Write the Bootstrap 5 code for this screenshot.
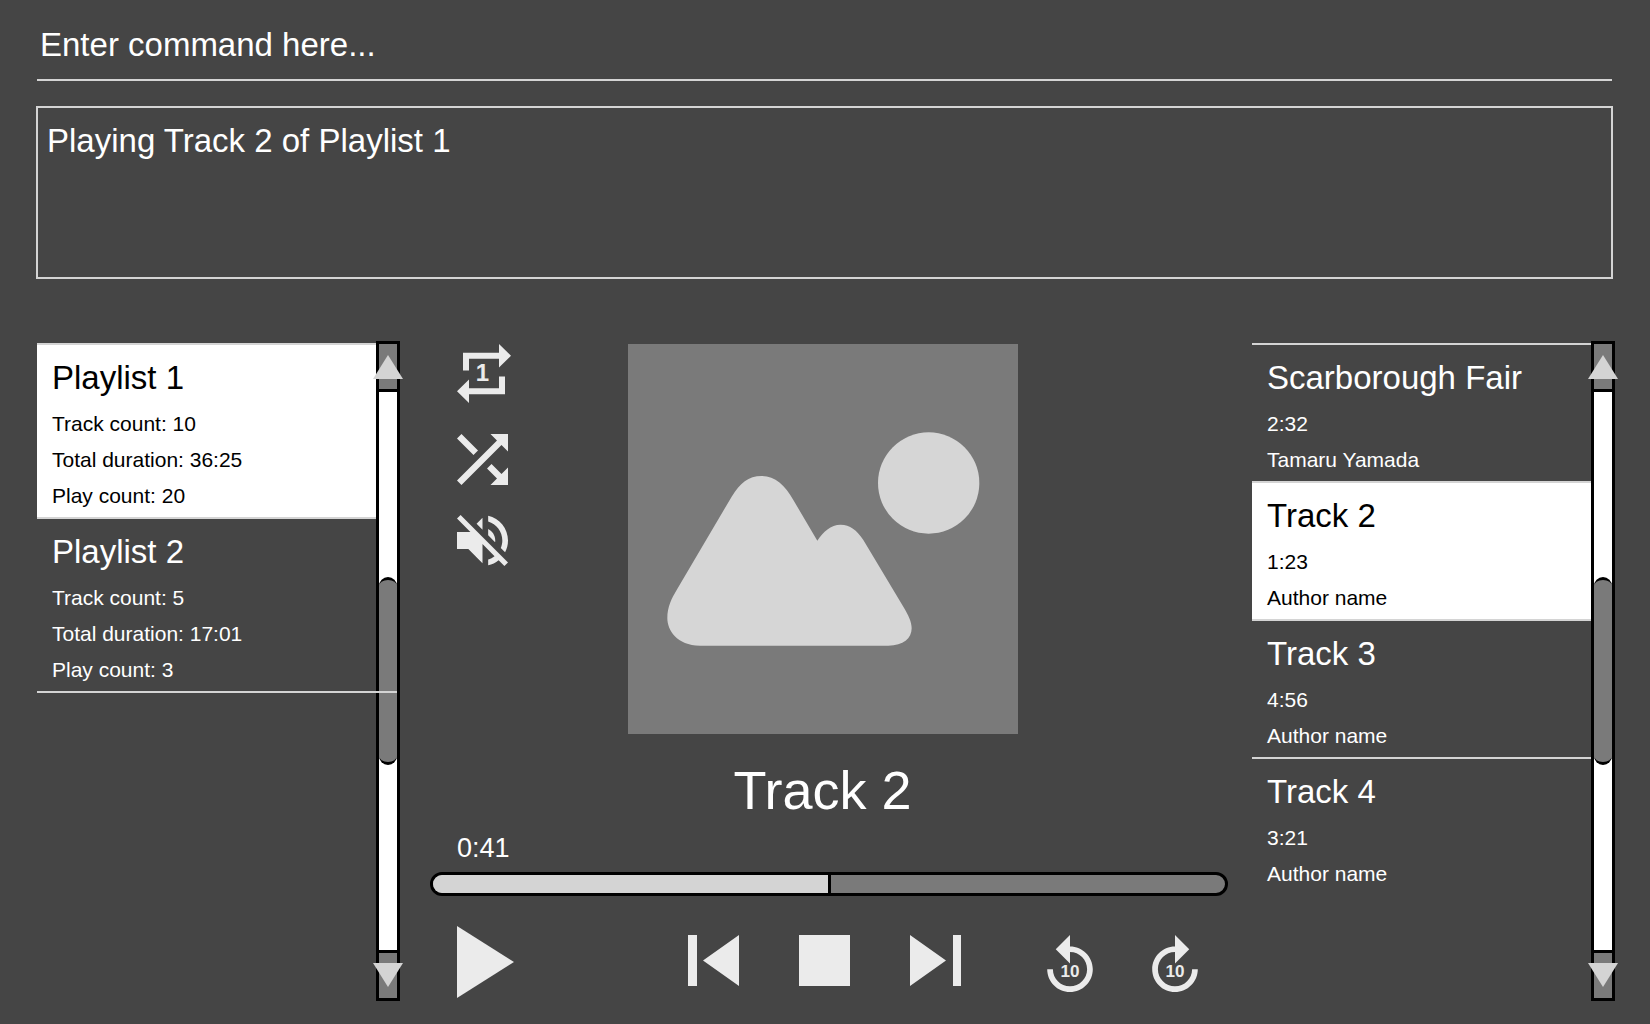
<!DOCTYPE html>
<html lang="en">
<head>
    <meta charset="UTF-8">
    <meta name="viewport" content="width=device-width, initial-scale=1.0">
    <link href="https://cdn.jsdelivr.net/npm/bootstrap@5.3.3/dist/css/bootstrap.min.css" rel="stylesheet">
    <script src="https://cdn.jsdelivr.net/npm/bootstrap@5.3.3/dist/js/bootstrap.bundle.min.js"></script>
    <title>Music Player</title>
    <style>
        body { background: #454545; color: #fff; font-family: "Liberation Sans", Arial, sans-serif; height: 1024px; overflow: hidden; }
        .shell { padding: 0 37px 0 36px; }

        .cmd-input { background: transparent; color: #fff; border: 0; border-bottom: 2px solid #d4d4d4; border-radius: 0; font-size: 33px; line-height: 37px; height: 81px; padding: 26px 3px 16px 3px; margin-left: 1px; width: calc(100% - 2px); }
        .cmd-input::placeholder { color: #fff; opacity: 1; }
        .cmd-input:focus { background: transparent; color: #fff; box-shadow: none; border-color: #d4d4d4; }
        .log-box { border: 2px solid #d4d4d4; height: 173px; margin-top: 25px; padding: 14px 9px; font-size: 33px; line-height: 38px; }

        .main-row { margin-top: 62px; height: 660px; }
        .side-left { width: 364px; }
        .side-left .items { margin-left: 1px; }
        .side-right { width: 363px; }
        .centre { width: 798px; margin: 0 24px 0 30px; }

        .items { padding-top: 2px; }
        .list-group-flush > .entry { padding: 9px 15px 3px 15px; border: 0; border-bottom: 2px solid #d4d4d4; border-radius: 0; background: transparent; color: #fff; position: relative; }
        .list-group-flush > .entry:first-child { border-top: 2px solid #d4d4d4; }
        .list-group-flush > .entry.picked { background: #fff; color: #000; }
        .list-group-flush > .entry.no-line { border-bottom: 0; }
        .list-group-flush > .entry.over-bar { margin-right: -21px; z-index: 2; background: transparent; }
        .list-group-flush > .entry.over-bar:last-child { border-bottom: 2px solid #d4d4d4; }
        .entry-title { font-size: 33px; line-height: 48px; margin-bottom: 4px; }
        .entry-meta { font-size: 21px; line-height: 36px; }

        .sbar { width: 24px; height: 660px; background: #fff; border-left: 3px solid #000; border-right: 3px solid #000; position: relative; }
        .sbar-end { height: 51px; background: #7a7a7a; border: 0 solid #000; position: relative; }
        .sbar-end.up { border-top-width: 3px; border-bottom-width: 3px; }
        .sbar-end.down { border-top-width: 3px; border-bottom-width: 3px; }
        .sbar-end::after { content: ""; position: absolute; left: -6px; border-left: 15px solid transparent; border-right: 15px solid transparent; }
        .sbar-end.up::after { top: 11px; border-bottom: 24px solid #d4d4d4; }
        .sbar-end.down::after { top: 10px; border-top: 24px solid #d4d4d4; }
        .sbar-gap { height: 185px; }
        .sbar-thumb { height: 188px; background: #7a7a7a; border: 3px solid #000; border-left: 0; border-right: 0; border-radius: 12px; }

        .top-block { padding: 3px 0 0 27px; height: 393px; }
        .icon-col { width: 54px; }
        .icon-col svg { display: block; fill: #ebebeb; }
        .icon-col svg + svg { margin-top: 30px; }
        .icon-col svg:nth-child(2) { margin-top: 31px; }
        .art { width: 390px; height: 390px; background: #7a7a7a; margin-left: 117px; display: block; }
        .now-title { font-size: 54px; line-height: 60px; margin-top: 26px; padding-right: 13px; text-align: center; }
        .now-time { font-size: 27px; line-height: 36px; margin-top: 10px; padding-left: 27px; }
        .seek { height: 24px; margin-top: 6px; border: 3px solid #000; border-radius: 12px; background: #7a7a7a; overflow: hidden; }
        .seek-done { background: #d4d4d4; border-right: 3px solid #000; height: 100%; }
        .controls { margin-top: 30px; padding-left: 27px; }
        .controls .btn { padding: 0; border: 0; border-radius: 0; line-height: 0; }
        .controls svg { display: block; fill: #ebebeb; }
        .controls svg text { font-family: "Liberation Sans", Arial, sans-serif; font-weight: bold; }
        .ctl-low { margin-top: 9px; }
    </style>
</head>
<body>
    <div class="shell">
        <input class="form-control cmd-input" type="text" placeholder="Enter command here...">
        <div class="log-box">Playing Track 2 of Playlist 1</div>

        <div class="main-row d-flex">
            <!-- playlists -->
            <div class="side-left d-flex flex-shrink-0">
                <div class="items flex-grow-1">
                    <div class="list-group list-group-flush">
                        <div class="list-group-item entry picked">
                            <div class="entry-title">Playlist 1</div>
                            <div class="entry-meta">Track count: 10</div>
                            <div class="entry-meta">Total duration: 36:25</div>
                            <div class="entry-meta">Play count: 20</div>
                        </div>
                        <div class="list-group-item entry over-bar">
                            <div class="entry-title">Playlist 2</div>
                            <div class="entry-meta">Track count: 5</div>
                            <div class="entry-meta">Total duration: 17:01</div>
                            <div class="entry-meta">Play count: 3</div>
                        </div>
                    </div>
                </div>
                <div class="sbar flex-shrink-0">
                    <div class="sbar-end up"></div>
                    <div class="sbar-gap"></div>
                    <div class="sbar-thumb"></div>
                    <div class="sbar-gap"></div>
                    <div class="sbar-end down"></div>
                </div>
            </div>

            <!-- player -->
            <div class="centre flex-shrink-0">
                <div class="top-block d-flex align-items-start">
                    <div class="icon-col">
                        <svg width="54" height="59" viewBox="3 2 18 20" preserveAspectRatio="none"><path d="M7 7h10v3l4-4-4-4v3H5v6h2V7zm10 10H7v-3l-4 4 4 4v-3h12v-6h-2v4z"/><text x="11.5" y="14.7" font-size="8" font-weight="bold" text-anchor="middle" font-family="Liberation Sans, sans-serif">1</text></svg>
                        <svg width="51" height="51" viewBox="4 4 16 16"><path d="M10.59 9.17L5.41 4 4 5.41l5.17 5.17 1.42-1.41zM14.5 4l2.04 2.04L4 18.59 5.41 20 17.96 7.46 20 9.5V4h-5.5zm.33 9.41l-1.41 1.41 3.13 3.13L14.5 20H20v-5.5l-2.04 2.04-3.13-3.13z"/></svg>
                        <svg width="51" height="51" viewBox="3 3 18 18"><path d="M16.5 12c0-1.77-1.02-3.29-2.5-4.03v2.21l2.45 2.45c.03-.2.05-.41.05-.63zm2.5 0c0 .94-.2 1.82-.54 2.64l1.51 1.51C20.63 14.91 21 13.5 21 12c0-4.28-2.99-7.86-7-8.77v2.06c2.89.86 5 3.54 5 6.71zM4.27 3L3 4.27 7.73 9H3v6h4l5 5v-6.73l4.25 4.25c-.67.52-1.42.93-2.25 1.18v2.06c1.38-.31 2.63-.95 3.69-1.81L19.73 21 21 19.73l-9-9L4.27 3zM12 4L9.91 6.09 12 8.18V4z"/></svg>
                    </div>
                    <svg class="art flex-shrink-0" viewBox="24 12 1170 1170">
                        <path fill="#d6d6d6" d="M240 917C170 917 142 870 142 835C142 800 155 775 170 750L335 470C360 430 385 408 425 408C465 408 495 435 520 480L592 602C610 575 632 554 662 554C690 554 710 570 730 600L850 800C865 825 875 845 875 865C875 895 850 917 805 917Z"/>
                        <circle fill="#d6d6d6" cx="926" cy="429" r="152"/>
                    </svg>
                </div>
                <div class="now-title">Track 2</div>
                <div class="now-time">0:41</div>
                <div class="seek"><div class="seek-done" style="width: 50.25%"></div></div>
                <div class="controls d-flex align-items-start">
                    <button class="btn" type="button" aria-label="Play"><svg width="57" height="72" viewBox="0 0 57 72"><path d="M0 0L57 36L0 72Z"/></svg></button>
                    <button class="btn ctl-low" style="margin-left: 174px" type="button" aria-label="Previous"><svg width="51" height="51" viewBox="0 0 51 51"><path d="M0 0H9V51H0ZM51 0V51L15 25.5Z"/></svg></button>
                    <button class="btn ctl-low" style="margin-left: 60px" type="button" aria-label="Stop"><svg width="51" height="51" viewBox="0 0 51 51"><path d="M0 0H51V51H0Z"/></svg></button>
                    <button class="btn ctl-low" style="margin-left: 60px" type="button" aria-label="Next"><svg width="51" height="51" viewBox="0 0 51 51"><path d="M0 0L36 25.5L0 51ZM43 0H51V51H43Z"/></svg></button>
                    <button class="btn ctl-low" style="margin-left: 86px" type="button" aria-label="Back 10"><svg width="46" height="57" viewBox="4 1 16 20"><path d="M12 5V1L7 6l5 5V7c3.31 0 6 2.69 6 6s-2.69 6-6 6-6-2.69-6-6H4c0 4.42 3.58 8 8 8s8-3.58 8-8-3.58-8-8-8z"/><text x="12" y="15.6" font-size="6" text-anchor="middle">10</text></svg></button>
                    <button class="btn ctl-low" style="margin-left: 59px" type="button" aria-label="Forward 10"><svg width="46" height="57" viewBox="4 1 16 20"><path d="M12 5V1l5 5-5 5V7c-3.31 0-6 2.69-6 6s2.69 6 6 6 6-2.69 6-6h2c0 4.42-3.58 8-8 8s-8-3.58-8-8 3.58-8 8-8z"/><text x="12" y="15.6" font-size="6" text-anchor="middle">10</text></svg></button>
                </div>
            </div>

            <!-- tracks -->
            <div class="side-right d-flex flex-shrink-0">
                <div class="items flex-grow-1">
                    <div class="list-group list-group-flush">
                        <div class="list-group-item entry">
                            <div class="entry-title">Scarborough Fair</div>
                            <div class="entry-meta">2:32</div>
                            <div class="entry-meta">Tamaru Yamada</div>
                        </div>
                        <div class="list-group-item entry picked">
                            <div class="entry-title">Track 2</div>
                            <div class="entry-meta">1:23</div>
                            <div class="entry-meta">Author name</div>
                        </div>
                        <div class="list-group-item entry">
                            <div class="entry-title">Track 3</div>
                            <div class="entry-meta">4:56</div>
                            <div class="entry-meta">Author name</div>
                        </div>
                        <div class="list-group-item entry no-line">
                            <div class="entry-title">Track 4</div>
                            <div class="entry-meta">3:21</div>
                            <div class="entry-meta">Author name</div>
                        </div>
                    </div>
                </div>
                <div class="sbar flex-shrink-0">
                    <div class="sbar-end up"></div>
                    <div class="sbar-gap"></div>
                    <div class="sbar-thumb"></div>
                    <div class="sbar-gap"></div>
                    <div class="sbar-end down"></div>
                </div>
            </div>
        </div>
    </div>
</body>
</html>
